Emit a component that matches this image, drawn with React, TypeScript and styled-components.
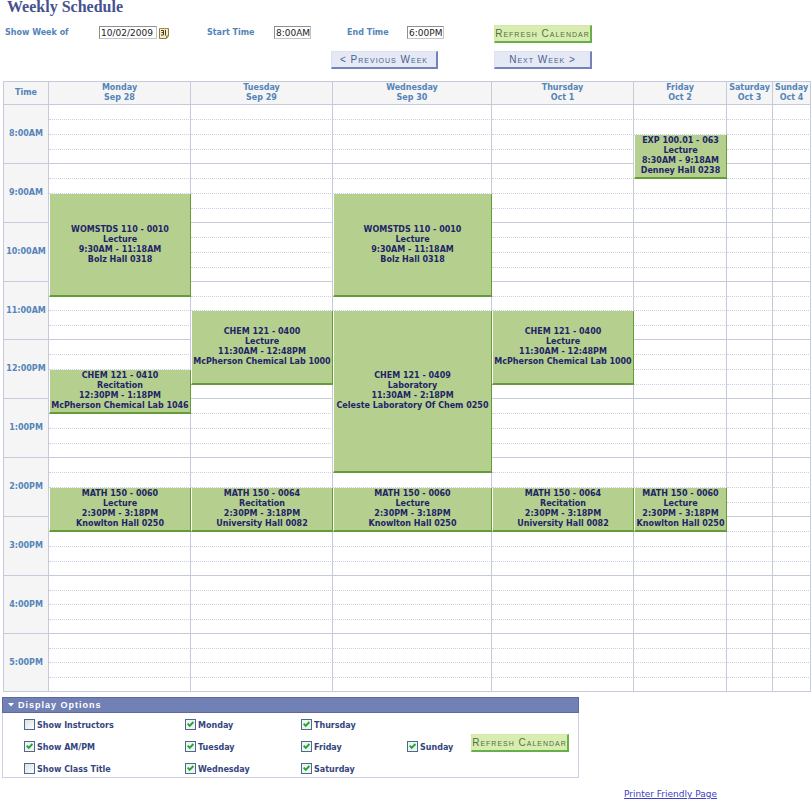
import React from "react";
import styled, { createGlobalStyle, css } from "styled-components";

const sans = `Verdana, "DejaVu Sans", sans-serif`;
const arial = `"Liberation Sans", Arial, sans-serif`;

const GlobalStyle = createGlobalStyle`
  *, *::before, *::after { box-sizing: border-box; }
  body {
    margin: 0;
    background: #fff;
    font-family: ${sans};
    font-size: 8px;
    line-height: 10px;
    color: #35457c;
  }
`;

const Page = styled.main`
  display: flow-root;
`;

const Title = styled.h1`
  margin: 0 0 11px 7px;
  font: bold 16px/14px "Liberation Serif", "Times New Roman", serif;
  color: #46528f;
`;

const Filters = styled.form`
  display: grid;
  grid-template-columns: 94px 108px 67px 73px 60px 87px 98px;
  align-items: start;
  padding-left: 5px;
`;

const FieldLabel = styled.label`
  font-weight: bold;
  line-height: 15px;
  color: #5484b8;
`;

const Field = styled.div`
  display: flex;
  align-items: center;
  gap: 2px;
  height: 15px;
`;

const TextBox = styled.input<{ $wide?: boolean }>`
  width: ${(p) => (p.$wide ? 58 : 37)}px;
  height: 13px;
  padding: 0 0 0 1px;
  border: 1px solid;
  border-color: #8f8f8f #c4c4c4 #c4c4c4 #8f8f8f;
  background: #fff;
  font: 9px/11px ${sans};
  color: #222;
`;

const IconButton = styled.button`
  display: flex;
  padding: 0;
  border: 0;
  background: none;
  cursor: pointer;
`;

const Button = styled.button<{ $tone: "green" | "blue"; $wide?: boolean }>`
  width: ${(p) => (p.$wide ? 107 : 98)}px;
  height: 18px;
  padding: 0;
  border: solid;
  border-width: 1px 2px 2px 1px;
  font: 10px/14px ${arial};
  font-variant: small-caps;
  letter-spacing: 1px;
  white-space: nowrap;
  cursor: pointer;
  ${(p) =>
    p.$tone === "green"
      ? css`
          border-color: #d3e9ac #66b04c #66b04c #d3e9ac;
          background: #d9edb0;
          color: #4f7046;
        `
      : css`
          border-color: #dde2f0 #7382b8 #7382b8 #dde2f0;
          background: #e4e9f5;
          color: #4c5f8c;
        `}
`;

const WeekNav = styled.nav`
  display: flex;
  gap: 56px;
  margin: 8px 0 12px;
  padding-left: 331px;
`;

const CalendarWrap = styled.div`
  padding: 0 1px 0 3px;
`;

const Calendar = styled.table`
  width: 100%;
  table-layout: fixed;
  border-collapse: separate;
  border-spacing: 0;
  border: solid #c6cbdb;
  border-width: 1px 0 0 1px;
  text-align: center;
  font-weight: bold;
`;

const Col = styled.col<{ $w: number }>`
  width: ${(p) => p.$w}px;
`;

const HeadCell = styled.th`
  height: 23px;
  padding: 0;
  border: solid #c6cbdb;
  border-width: 0 1px 1px 0;
  background: #f5f5f6;
  color: #5484b8;
`;

const TimeCell = styled(HeadCell)`
  height: auto;
`;

const SlotRow = styled.tr<{ $short: boolean }>`
  height: ${(p) => (p.$short ? 14 : 15)}px;
`;

const Slot = styled.td<{ $hourEnd: boolean }>`
  padding: 0;
  border-right: 1px solid #c6cbdb;
  border-bottom: 1px ${(p) => (p.$hourEnd ? "solid #c6cbdb" : "dotted #cdd1dd")};
`;

const EventCell = styled.td`
  padding: 0;
  border: solid;
  border-width: 0 1px 2px 1px;
  border-color: #fff #639c38 #639c38 #fff;
  background: #b5d08e;
  background-clip: padding-box;
  color: #1f2468;
  white-space: nowrap;
`;

const Line = styled.div``;

const Panel = styled.section`
  max-width: 577px;
  margin: 5px 0 0 2px;
`;

const PanelHeader = styled.h2`
  display: flex;
  align-items: center;
  gap: 4px;
  height: 16px;
  margin: 0;
  padding-left: 5px;
  border: 1px solid #5c6a9f;
  background: #7181b6;
  font: bold 9px/14px ${arial};
  letter-spacing: 1px;
  color: #fff;
`;

const Options = styled.form`
  display: grid;
  grid-template-columns: 161px 116px 106px 64px 98px;
  grid-template-rows: repeat(3, 18px);
  grid-auto-flow: column;
  row-gap: 4px;
  align-items: center;
  padding: 2px 0 0 21px;
  border: solid #cdd2e3;
  border-width: 0 1px 1px;
`;

const Option = styled.label<{ $middle?: boolean }>`
  display: flex;
  align-items: flex-end;
  gap: 2px;
  font-weight: bold;
  line-height: 8px;
  ${(p) => p.$middle && "grid-row: 2;"}
`;

const checkMark = `url("data:image/svg+xml,%3Csvg xmlns='http://www.w3.org/2000/svg' viewBox='0 0 9 9'%3E%3Cpath d='M1.7 3.7 3.7 5.9 7.4 2' fill='none' stroke='%2328a038' stroke-width='1.9'/%3E%3C/svg%3E")`;

const CheckBox = styled.input`
  appearance: none;
  width: 11px;
  height: 11px;
  margin: 0;
  border: 1px solid #4b6a92;
  background: linear-gradient(135deg, #dfe3e4, #fafafa);
  &:checked {
    background: ${checkMark} center / 9px 9px no-repeat, #eef5ee;
  }
`;

const Refresh = styled.div`
  grid-row: 1 / 4;
  grid-column: 5;
  padding-bottom: 6px;
`;

const Footer = styled.footer`
  display: flex;
  justify-content: flex-end;
  padding: 10px 95px 0 0;
`;

const PrintLink = styled.a`
  font-size: 9px;
  line-height: 12px;
  color: #4040c0;
`;

const CalendarIcon = () => (
  <svg width="10" height="12" viewBox="0 0 10 12" aria-hidden="true">
    <path d="M.5 1.5h9v7.5l-2 2.500h-7z" fill="#f6edc4" stroke="#8d7b45" />
    <path d="M1 1.500h8" stroke="#b39a55" strokeDasharray="1 1" />
    <path d="M2 3.500h2.500v4.500H2M2.500 5.500h2M6.500 3v5.500" fill="none" stroke="#4d3a1c" />
    <path d="M7.500 11V9H9" fill="none" stroke="#8d7b45" />
  </svg>
);

const Caret = () => (
  <svg width="6" height="4" viewBox="0 0 6 4" aria-hidden="true">
    <path d="M0 0h6L3 3.500z" fill="#fff" />
  </svg>
);

const days = [
  { name: "Monday", date: "Sep 28", width: 142 },
  { name: "Tuesday", date: "Sep 29", width: 142 },
  { name: "Wednesday", date: "Sep 30", width: 159 },
  { name: "Thursday", date: "Oct 1", width: 142 },
  { name: "Friday", date: "Oct 2", width: 93 },
  { name: "Saturday", date: "Oct 3", width: 46 },
  { name: "Sunday", date: "Oct 4", width: 38 },
];

const hours = [
  "8:00AM", "9:00AM", "10:00AM", "11:00AM", "12:00PM",
  "1:00PM", "2:00PM", "3:00PM", "4:00PM", "5:00PM",
];

// Hours whose quarter rows add up to 58px instead of 59px.
const shortHours = [3, 8, 9];

// `start` and `span` count quarter-hour rows from the first row of the grid.
type Meeting = { day: number; start: number; span: number; lines: string[] };

const meetings: Meeting[] = [
  { day: 0, start: 6, span: 7, lines: ["WOMSTDS 110 - 0010", "Lecture", "9:30AM - 11:18AM", "Bolz Hall 0318"] },
  { day: 2, start: 6, span: 7, lines: ["WOMSTDS 110 - 0010", "Lecture", "9:30AM - 11:18AM", "Bolz Hall 0318"] },
  { day: 4, start: 2, span: 3, lines: ["EXP 100.01 - 063", "Lecture", "8:30AM - 9:18AM", "Denney Hall 0238"] },
  { day: 1, start: 14, span: 5, lines: ["CHEM 121 - 0400", "Lecture", "11:30AM - 12:48PM", "McPherson Chemical Lab 1000"] },
  { day: 3, start: 14, span: 5, lines: ["CHEM 121 - 0400", "Lecture", "11:30AM - 12:48PM", "McPherson Chemical Lab 1000"] },
  { day: 2, start: 14, span: 11, lines: ["CHEM 121 - 0409", "Laboratory", "11:30AM - 2:18PM", "Celeste Laboratory Of Chem 0250"] },
  { day: 0, start: 18, span: 3, lines: ["CHEM 121 - 0410", "Recitation", "12:30PM - 1:18PM", "McPherson Chemical Lab 1046"] },
  { day: 0, start: 26, span: 3, lines: ["MATH 150 - 0060", "Lecture", "2:30PM - 3:18PM", "Knowlton Hall 0250"] },
  { day: 1, start: 26, span: 3, lines: ["MATH 150 - 0064", "Recitation", "2:30PM - 3:18PM", "University Hall 0082"] },
  { day: 2, start: 26, span: 3, lines: ["MATH 150 - 0060", "Lecture", "2:30PM - 3:18PM", "Knowlton Hall 0250"] },
  { day: 3, start: 26, span: 3, lines: ["MATH 150 - 0064", "Recitation", "2:30PM - 3:18PM", "University Hall 0082"] },
  { day: 4, start: 26, span: 3, lines: ["MATH 150 - 0060", "Lecture", "2:30PM - 3:18PM", "Knowlton Hall 0250"] },
];

const options = [
  { label: "Show Instructors", on: false },
  { label: "Show AM/PM", on: true },
  { label: "Show Class Title", on: false },
  { label: "Monday", on: true },
  { label: "Tuesday", on: true },
  { label: "Wednesday", on: true },
  { label: "Thursday", on: true },
  { label: "Friday", on: true },
  { label: "Saturday", on: true },
  { label: "Sunday", on: true, middle: true },
];

function DaySlot({ day, row }: { day: number; row: number }) {
  const meeting = meetings.find(
    (m) => m.day === day && row >= m.start && row < m.start + m.span
  );
  if (!meeting) return <Slot $hourEnd={row % 4 === 3} />;
  if (meeting.start !== row) return null;
  return (
    <EventCell rowSpan={meeting.span}>
      {meeting.lines.map((line) => (
        <Line key={line}>{line}</Line>
      ))}
    </EventCell>
  );
}

export default function App() {
  return (
    <Page>
      <GlobalStyle />
      <Title>Weekly Schedule</Title>
      <Filters onSubmit={(e) => e.preventDefault()}>
        <FieldLabel htmlFor="week">Show Week of</FieldLabel>
        <Field>
          <TextBox id="week" $wide defaultValue="10/02/2009" />
          <IconButton type="button" aria-label="Choose a date">
            <CalendarIcon />
          </IconButton>
        </Field>
        <FieldLabel htmlFor="start">Start Time</FieldLabel>
        <Field>
          <TextBox id="start" defaultValue="8:00AM" />
        </Field>
        <FieldLabel htmlFor="end">End Time</FieldLabel>
        <Field>
          <TextBox id="end" defaultValue="6:00PM" />
        </Field>
        <Button $tone="green">Refresh Calendar</Button>
      </Filters>
      <WeekNav>
        <Button type="button" $tone="blue" $wide>&lt; Previous Week</Button>
        <Button type="button" $tone="blue">Next Week &gt;</Button>
      </WeekNav>

      <CalendarWrap>
        <Calendar>
          <colgroup>
            <Col $w={45} />
            {days.map((d) => (
              <Col key={d.name} $w={d.width} />
            ))}
          </colgroup>
          <thead>
            <tr>
              <HeadCell scope="col">Time</HeadCell>
              {days.map((d) => (
                <HeadCell key={d.name} scope="col">
                  <Line>{d.name}</Line>
                  <Line>{d.date}</Line>
                </HeadCell>
              ))}
            </tr>
          </thead>
          <tbody>
            {hours.flatMap((hour, h) =>
              [0, 1, 2, 3].map((q) => (
                <SlotRow
                  key={hour + q}
                  $short={q === 3 || (q === 1 && shortHours.includes(h))}
                >
                  {q === 0 && (
                    <TimeCell scope="row" rowSpan={4}>{hour}</TimeCell>
                  )}
                  {days.map((d, i) => (
                    <DaySlot key={d.name} day={i} row={h * 4 + q} />
                  ))}
                </SlotRow>
              ))
            )}
          </tbody>
        </Calendar>
      </CalendarWrap>

      <Panel>
        <PanelHeader>
          <Caret />
          Display Options
        </PanelHeader>
        <Options onSubmit={(e) => e.preventDefault()}>
          {options.map((o) => (
            <Option key={o.label} $middle={o.middle}>
              <CheckBox type="checkbox" defaultChecked={o.on} />
              {o.label}
            </Option>
          ))}
          <Refresh>
            <Button $tone="green">Refresh Calendar</Button>
          </Refresh>
        </Options>
      </Panel>
      <Footer>
        <PrintLink href="#print">Printer Friendly Page</PrintLink>
      </Footer>
    </Page>
  );
}
